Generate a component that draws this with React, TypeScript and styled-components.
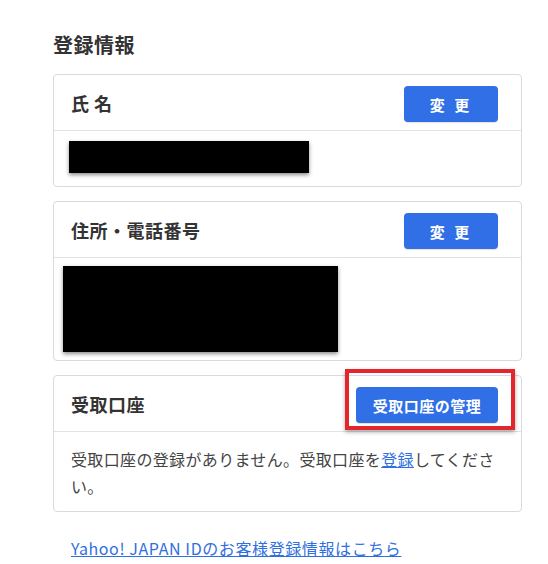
import React from "react";
import styled, { createGlobalStyle } from "styled-components";

const GlobalStyle = createGlobalStyle`
  html, body {
    margin: 0;
    padding: 0;
    background: #ffffff;
  }
  body {
    font-family: "Noto Sans CJK JP", "Noto Sans", sans-serif;
    color: #333333;
  }
`;

const Page = styled.div`
  width: 548px;
  height: 564px;
  box-sizing: border-box;
  padding: 30px 26px 0 53px;
  display: flex;
  flex-direction: column;
`;

const Title = styled.h2`
  margin: 0 0 14px;
  font-size: 20px;
  line-height: 30px;
  font-weight: 700;
  letter-spacing: 0.5px;
  color: #333333;
`;

const Cards = styled.div`
  display: flex;
  flex-direction: column;
  gap: 14px;
`;

const Card = styled.section`
  border: 1px solid #d6dae2;
  border-radius: 4px;
  background: #ffffff;
`;

const CardHeader = styled.div`
  height: 56px;
  box-sizing: border-box;
  padding: 3px 23px 0 17px;
  display: flex;
  align-items: center;
  justify-content: space-between;
  border-bottom: 1px solid #dfe3ea;
`;

const CardTitle = styled.h3`
  margin: 0 0 3px;
  font-size: 18px;
  line-height: 26px;
  font-weight: 700;
  letter-spacing: 0.5px;
  color: #333333;
`;

const ButtonWrap = styled.div`
  position: relative;
  display: flex;
`;

const Button = styled.button<{ $w: number }>`
  width: ${(p) => p.$w}px;
  height: 36px;
  border: none;
  border-radius: 4px;
  background: #306fe6;
  color: #ffffff;
  font-family: "Noto Sans CJK JP", "Noto Sans", sans-serif;
  font-size: 15px;
  font-weight: 700;
  letter-spacing: ${(p) => (p.$w < 100 ? "3px" : "0.5px")};
  padding: 0;
  cursor: pointer;
  box-shadow: 0 1px 1px rgba(0, 0, 0, 0.12);
`;

const Highlight = styled.span`
  position: absolute;
  left: -11px;
  right: -17px;
  top: -18px;
  bottom: -7px;
  border: 4px solid #e3262c;
  box-shadow: 0 2px 4px rgba(0, 0, 0, 0.35);
  pointer-events: none;
`;

const CardBody = styled.div<{ $pad: string }>`
  padding: ${(p) => p.$pad};
`;

const Redacted = styled.div<{ $w: number; $h: number }>`
  width: ${(p) => p.$w}px;
  height: ${(p) => p.$h}px;
  background: #000000;
  box-shadow: 0 2px 4px rgba(0, 0, 0, 0.45);
`;

const BodyText = styled.p`
  margin: 0;
  font-size: 16px;
  line-height: 27px;
  letter-spacing: 0.35px;
  color: #444444;
`;

const InlineLink = styled.a`
  color: #2f6fe0;
  text-decoration: underline;
`;

const FooterLink = styled.a`
  margin: 24px 0 0 18px;
  font-size: 16px;
  line-height: 24px;
  letter-spacing: 0.6px;
  color: #2f6fe0;
  text-decoration: underline;
  align-self: flex-start;
`;

export default function App() {
  return (
    <>
      <GlobalStyle />
      <Page>
        <Title>登録情報</Title>
        <Cards>
          <Card>
            <CardHeader>
              <CardTitle>氏 名</CardTitle>
              <ButtonWrap>
                <Button $w={94}>変 更</Button>
              </ButtonWrap>
            </CardHeader>
            <CardBody $pad="10px 0 13px 15px">
              <Redacted $w={240} $h={32} />
            </CardBody>
          </Card>
          <Card>
            <CardHeader>
              <CardTitle>住所・電話番号</CardTitle>
              <ButtonWrap>
                <Button $w={94}>変 更</Button>
              </ButtonWrap>
            </CardHeader>
            <CardBody $pad="8px 0 8px 9px">
              <Redacted $w={275} $h={86} />
            </CardBody>
          </Card>
          <Card>
            <CardHeader>
              <CardTitle>受取口座</CardTitle>
              <ButtonWrap>
                <Button $w={142}>受取口座の管理</Button>
                <Highlight />
              </ButtonWrap>
            </CardHeader>
            <CardBody $pad="14px 17px 11px 17px">
              <BodyText>
                受取口座の登録がありません。受取口座を
                <InlineLink href="#">登録</InlineLink>
                してください。
              </BodyText>
            </CardBody>
          </Card>
        </Cards>
        <FooterLink href="#">Yahoo! JAPAN IDのお客様登録情報はこちら</FooterLink>
      </Page>
    </>
  );
}
